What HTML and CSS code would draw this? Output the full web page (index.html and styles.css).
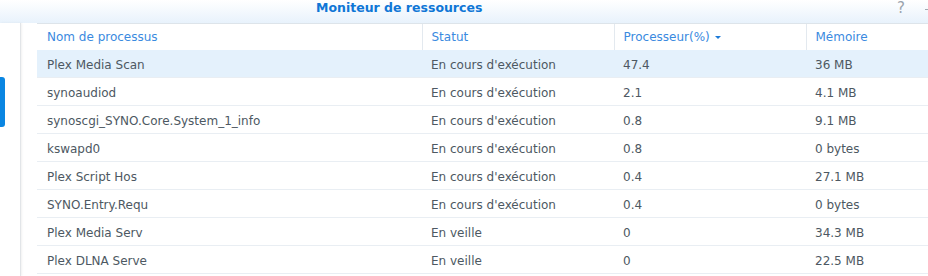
FILE: index.html
```html
<!DOCTYPE html>
<html lang="fr">
<head>
<meta charset="UTF-8">
<title>Moniteur de ressources</title>
<link rel="stylesheet" href="styles.css">
</head>
<body>

<div class="window">
    <div class="titlebar">
        <span class="title">Moniteur de ressources</span>
        <div class="tools">
            <span class="help">?</span>
            <span class="minimize"></span>
        </div>
    </div>

    <div class="main">
        <div class="sidebar">
            <div class="tab-active"></div>
        </div>

        <div class="content">
            <table class="grid">
                <colgroup>
                    <col style="width: 385px;">
                    <col style="width: 192px;">
                    <col style="width: 192px;">
                    <col style="width: 192px;">
                </colgroup>
                <thead>
                    <tr>
                        <th>Nom de processus</th>
                        <th>Statut</th>
                        <th>Processeur(%)<span class="sort-arrow"></span></th>
                        <th>Mémoire</th>
                    </tr>
                </thead>
                <tbody>
                    <tr class="selected">
                        <td>Plex Media Scan</td>
                        <td>En cours d'exécution</td>
                        <td>47.4</td>
                        <td>36 MB</td>
                    </tr>
                    <tr>
                        <td>synoaudiod</td>
                        <td>En cours d'exécution</td>
                        <td>2.1</td>
                        <td>4.1 MB</td>
                    </tr>
                    <tr>
                        <td>synoscgi_SYNO.Core.System_1_info</td>
                        <td>En cours d'exécution</td>
                        <td>0.8</td>
                        <td>9.1 MB</td>
                    </tr>
                    <tr>
                        <td>kswapd0</td>
                        <td>En cours d'exécution</td>
                        <td>0.8</td>
                        <td>0 bytes</td>
                    </tr>
                    <tr>
                        <td>Plex Script Hos</td>
                        <td>En cours d'exécution</td>
                        <td>0.4</td>
                        <td>27.1 MB</td>
                    </tr>
                    <tr>
                        <td>SYNO.Entry.Requ</td>
                        <td>En cours d'exécution</td>
                        <td>0.4</td>
                        <td>0 bytes</td>
                    </tr>
                    <tr>
                        <td>Plex Media Serv</td>
                        <td>En veille</td>
                        <td>0</td>
                        <td>34.3 MB</td>
                    </tr>
                    <tr>
                        <td>Plex DLNA Serve</td>
                        <td>En veille</td>
                        <td>0</td>
                        <td>22.5 MB</td>
                    </tr>
                </tbody>
            </table>
        </div>
    </div>
</div>

</body>
</html>
```

FILE: styles.css
```css
body {
    font-family: "DejaVu Sans", Verdana, sans-serif;
    margin: 0;
    padding: 0;
    background-color: #fff;
    overflow: hidden;
}
.window {
    width: 928px;
    height: 276px;
    overflow: hidden;
}
.titlebar {
    height: 23px;
    display: flex;
    align-items: center;
    background: linear-gradient(to bottom, #ffffff, #e8f2fc);
}
.title {
    padding-left: 316px;
    font-size: 12.5px;
    font-weight: bold;
    color: #0f76d6;
    margin-top: -8px;
}
.tools {
    margin-left: auto;
    display: flex;
    align-items: center;
    gap: 20px;
    margin-top: -7px;
}
.help {
    font-size: 15px;
    color: #9aa3ac;
}
.minimize {
    width: 6px;
    height: 1px;
    background-color: #a0a8b0;
    margin-right: -3px;
    margin-top: 3px;
}
.main {
    display: flex;
    height: 253px;
}
.sidebar {
    width: 20px;
    border-right: 1px solid #e2e5e8;
    box-shadow: 1px 0 2px rgba(0, 0, 0, 0.06);
    padding-top: 54px;
}
.tab-active {
    width: 5px;
    height: 50px;
    background-color: #0a86e2;
    border-radius: 0 3px 3px 0;
}
.content {
    padding-left: 16px;
    flex: 1;
    overflow: hidden;
}
.grid {
    border-collapse: collapse;
    table-layout: fixed;
    width: 961px;
    font-size: 12px;
    color: #4d5862;
}
.grid th {
    height: 26px;
    font-weight: normal;
    text-align: left;
    color: #3a8ae0;
    padding: 0 9px;
    border-top: 1px solid #dde4ea;
    border-left: 1px solid #e3e9ef;
}
.grid th:first-child {
    border-left: none;
    padding-left: 10px;
}
.sort-arrow {
    display: inline-block;
    margin-left: 5px;
    vertical-align: middle;
    border-left: 3px solid transparent;
    border-right: 3px solid transparent;
    border-top: 3px solid #1c7ad8;
}
.grid td {
    height: 25px;
    padding: 2px 9px 0;
    border-bottom: 1px solid #e9eef3;
    white-space: nowrap;
}
.grid td:first-child {
    padding-left: 10px;
}
.grid tr.selected td {
    background-color: #e4f1fc;
}
```
